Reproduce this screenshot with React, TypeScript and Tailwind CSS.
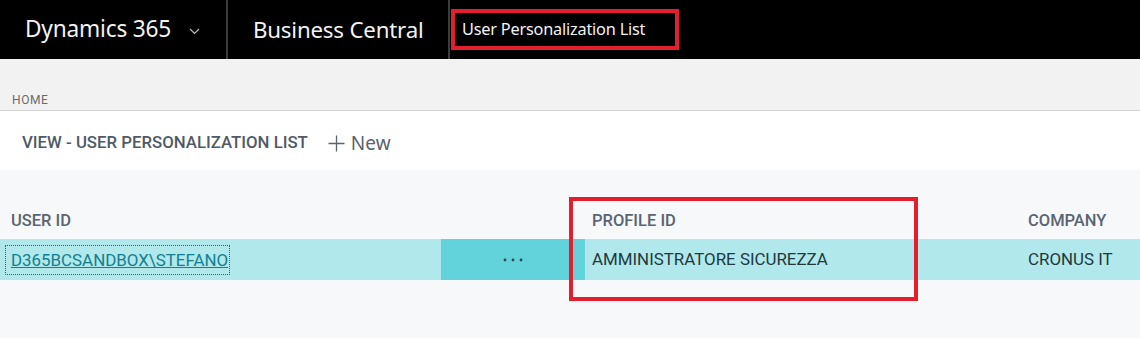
import React from "react";

export default function App() {
  const seg = { fontFamily: '"Noto Sans", "Open Sans", sans-serif' };
  const din = { fontFamily: 'Roboto, "Noto Sans", sans-serif' };
  return (
    <div className="relative w-[1140px] h-[338px] overflow-hidden bg-[#f7f8fa]" style={seg}>
      <header className="flex h-[59px] items-stretch bg-black text-[#f2f2f2]">
        <div className="flex w-[228px] items-center border-r-2 border-[#3c3c3c] pl-[25px]">
          <span className="text-[22.7px] tracking-[-0.2px]">Dynamics 365</span>
          <svg className="ml-[18px] mt-[3px]" width="11" height="7" viewBox="0 0 11 7" fill="none">
            <path d="M1 1l4.5 4.5L10 1" stroke="#bdbdbd" strokeWidth="1.2" />
          </svg>
        </div>
        <div className="flex w-[222px] items-center border-r-2 border-[#3c3c3c] pl-[25px]">
          <span className="text-[22.3px] tracking-[-0.2px]">Business Central</span>
        </div>
        <div className="flex items-center pl-[1px]">
          <div className="flex h-[41px] w-[228px] items-center border-[4px] border-[#e31f2d] pl-[7px]">
            <span className="text-[16.3px] tracking-[-0.2px]">User Personalization List</span>
          </div>
        </div>
      </header>
      <div className="flex h-[52px] items-end border-b border-[#d2d2d2] bg-[#f2f2f2] pb-[1px] pl-[12px]">
        <span className="text-[12px] tracking-[0.6px] text-[#6b6b6b]" style={din}>HOME</span>
      </div>
      <div className="flex h-[59px] items-center bg-white pl-[22px] pt-[5px]">
        <span className="text-[16.8px] font-medium text-[#505a66]" style={din}>VIEW - USER PERSONALIZATION LIST</span>
        <svg className="ml-[20px]" width="17" height="17" viewBox="0 0 17 17" fill="none">
          <path d="M8.5 0.5v16M0.5 8.5h16" stroke="#5a636e" strokeWidth="1.3" />
        </svg>
        <span className="ml-[6px] text-[19px] text-[#5a636e]">New</span>
      </div>
      <div className="pt-[33px]">
        <div className="flex h-[36px] items-center text-[16.5px] font-medium text-[#5b6470]" style={din}>
          <div className="w-[585px] pl-[11px]">USER ID</div>
          <div className="w-[443px] pl-[7px]">PROFILE ID</div>
          <div>COMPANY</div>
        </div>
        <div className="flex h-[41px] items-stretch bg-[#b0e8eb] text-[16.9px] text-[#1f3a3d]" style={din}>
          <div className="flex w-[441px] items-center pl-[5px]">
            <span className="border border-dotted border-[#555] pl-[5px] pr-[1px] py-[3px] leading-[22px] text-[#14808f] underline">D365BCSANDBOX\STEFANO</span>
          </div>
          <div className="flex w-[144px] items-center justify-center bg-[#62d3db]">
            <svg width="20" height="4" viewBox="0 0 20 4">
              <circle cx="2" cy="2" r="1.4" fill="#2a4a4e" />
              <circle cx="10" cy="2" r="1.4" fill="#2a4a4e" />
              <circle cx="18" cy="2" r="1.4" fill="#2a4a4e" />
            </svg>
          </div>
          <div className="flex w-[443px] items-center pl-[7px]">AMMINISTRATORE SICUREZZA</div>
          <div className="flex items-center">CRONUS IT</div>
        </div>
      </div>
      <div className="pointer-events-none absolute left-[569px] top-[197px] h-[104px] w-[349px] border-[4px] border-[#e31f2d]" />
    </div>
  );
}
